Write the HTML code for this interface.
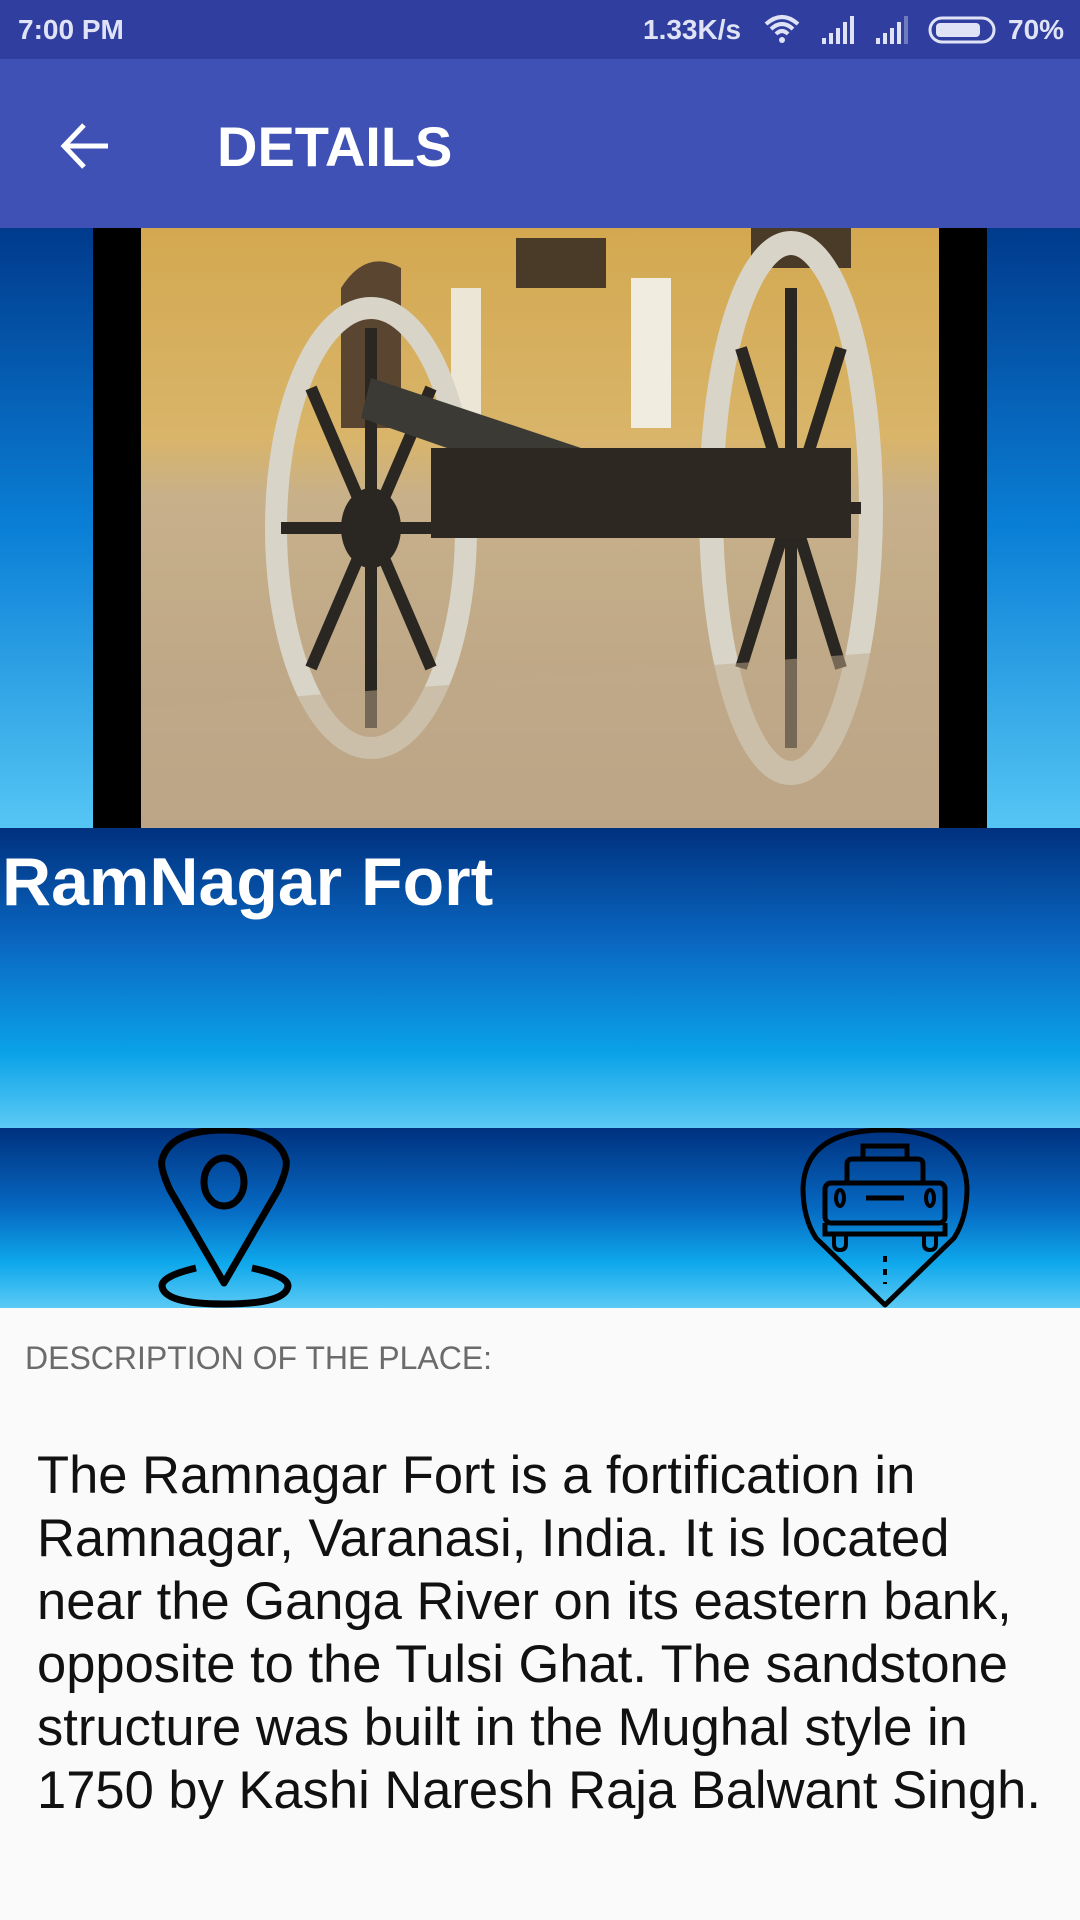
<!DOCTYPE html>
<html><head><meta charset="utf-8"><style>
*{margin:0;padding:0;box-sizing:border-box}
body{width:1080px;height:1920px;overflow:hidden;background:#fafafa;font-family:"Liberation Sans",sans-serif;position:relative}
.status{position:absolute;top:0;left:0;width:1080px;height:59px;background:#303f9f;color:#dfe3f5;font-weight:bold;font-size:28px}
.appbar{position:absolute;top:59px;left:0;width:1080px;height:169px;background:#3f51b5}
.imgband{position:absolute;top:228px;left:0;width:1080px;height:600px;background:linear-gradient(#003a8c,#0a7fd6 50%,#55c6f4)}
.black{position:absolute;top:228px;left:93px;width:894px;height:600px;background:#000}
.title{position:absolute;top:828px;left:0;width:1080px;height:300px;background:linear-gradient(#00317f,#0a6ac4 40%,#0aa2e8 75%,#5ccaf5)}
.icons{position:absolute;top:1128px;left:0;width:1080px;height:180px;background:linear-gradient(#00317f,#0669c2 45%,#0ea8ec 75%,#5ccaf5);overflow:hidden}
.lbl{position:absolute;top:1340px;left:25px;font-size:32px;color:#6b6b6b}
.body{position:absolute;top:1444px;left:37px;font-size:52.5px;line-height:63px;color:#111;white-space:nowrap}
</style></head><body>
<div class="status">
<span style="position:absolute;left:18px;top:14px">7:00 PM</span>
<span style="position:absolute;left:643px;top:14px">1.33K/s</span>
<svg style="position:absolute;left:762px;top:14px" width="60" height="32" viewBox="0 0 60 32"><path d="M4 10 Q20 -4 36 10 M9 15 Q20 5 31 15 M14 20 Q20 14 26 20" stroke="#dfe3f5" stroke-width="4" fill="none"/><circle cx="20" cy="26" r="3" fill="#dfe3f5"/></svg>
<svg style="position:absolute;left:820px;top:14px" width="100" height="32"><g fill="#dfe3f5"><rect x="2" y="24" width="4" height="6"/><rect x="9" y="19" width="4" height="11"/><rect x="16" y="14" width="4" height="16"/><rect x="23" y="8" width="4" height="22"/><rect x="30" y="2" width="4" height="28"/>
<rect x="56" y="24" width="4" height="6"/><rect x="63" y="19" width="4" height="11"/><rect x="70" y="14" width="4" height="16"/><rect x="77" y="8" width="4" height="22"/></g><rect x="84" y="2" width="4" height="28" fill="#6f7bbd"/></svg>
<svg style="position:absolute;left:928px;top:16px" width="70" height="30"><rect x="2" y="2" width="64" height="24" rx="12" fill="none" stroke="#dfe3f5" stroke-width="3"/><rect x="8" y="7" width="44" height="14" rx="4" fill="#dfe3f5"/></svg>
<span style="position:absolute;left:1008px;top:14px">70%</span>
</div>
<div class="appbar">
<svg style="position:absolute;left:58px;top:60px" width="54" height="54" viewBox="0 0 54 54"><path d="M50 27 H8 M26 6 L6 27 L26 48" stroke="#fff" stroke-width="5" fill="none"/></svg>
<span style="position:absolute;left:217px;top:55px;font-size:56px;color:#fff;font-weight:bold">DETAILS</span>
</div>
<div class="imgband"></div>
<div class="black"></div>
<svg style="position:absolute;left:141px;top:228px" width="798" height="600" viewBox="0 0 798 600">
<defs><linearGradient id="g" x1="0" y1="0" x2="0" y2="1"><stop offset="0" stop-color="#d3a850"/><stop offset="0.35" stop-color="#d9b56a"/><stop offset="0.45" stop-color="#c7b08a"/><stop offset="1" stop-color="#b8a184"/></linearGradient></defs>
<rect width="798" height="600" fill="url(#g)"/>
<path d="M200 60 Q225 20 260 40 L260 200 L200 200Z" fill="#5a4530"/>
<rect x="375" y="10" width="90" height="50" fill="#4a3a28"/>
<rect x="610" y="0" width="100" height="40" fill="#4a3a28"/>
<rect x="490" y="50" width="40" height="150" fill="#f0ece0"/>
<rect x="310" y="60" width="30" height="140" fill="#ece6d6"/>
<ellipse cx="230" cy="300" rx="95" ry="220" fill="none" stroke="#d8d4c8" stroke-width="22"/>
<ellipse cx="650" cy="280" rx="80" ry="265" fill="none" stroke="#d8d4c8" stroke-width="24"/>
<path d="M230 100 L230 500 M140 300 L320 300 M170 160 L290 440 M290 160 L170 440" stroke="#2a2622" stroke-width="12"/>
<path d="M650 60 L650 520 M580 280 L720 280 M600 120 L700 440 M700 120 L600 440" stroke="#2a2622" stroke-width="12"/>
<path d="M230 150 L470 230 L450 270 L220 190Z" fill="#3b3a34"/>
<rect x="290" y="220" width="420" height="90" fill="#2d2822"/>
<ellipse cx="230" cy="300" rx="30" ry="40" fill="#2a2622"/>
<path d="M0 480 L798 420 L798 600 L0 600Z" fill="#bfa98a" opacity="0.5"/>
</svg>
<div class="title"><div style="position:absolute;left:2px;top:15px;font-size:68px;font-weight:bold;color:#fff">RamNagar Fort</div></div>
<div class="icons">
<svg style="position:absolute;left:150px;top:0" width="150" height="180" viewBox="0 0 150 180">
<path d="M74 155 L20 62 Q10 40 12 32 Q20 2 74 2 Q128 2 136 32 Q138 40 128 62 Z" fill="none" stroke="#000" stroke-width="7" stroke-linejoin="round"/>
<ellipse cx="74" cy="54" rx="20" ry="24" fill="none" stroke="#000" stroke-width="7"/>
<path d="M46 140 Q12 148 12 158 Q14 176 74 176 Q136 176 138 158 Q138 148 102 140" fill="none" stroke="#000" stroke-width="7"/>
</svg>
<svg style="position:absolute;left:800px;top:0" width="172" height="180" viewBox="0 0 172 180">
<path d="M85 177 L16 110 Q3 90 3 60 Q5 2 85 2 Q165 2 167 60 Q167 90 154 110 Z" fill="none" stroke="#000" stroke-width="5" stroke-linejoin="round"/>
<rect x="63" y="18" width="44" height="13" fill="none" stroke="#000" stroke-width="5"/>
<path d="M47 55 L47 36 Q47 31 53 31 L117 31 Q123 31 123 36 L123 55" fill="none" stroke="#000" stroke-width="5"/>
<rect x="25" y="55" width="120" height="40" rx="6" fill="none" stroke="#000" stroke-width="5"/>
<path d="M25 95 V106 H145 V95 M66 70 H104" fill="none" stroke="#000" stroke-width="5"/>
<ellipse cx="40" cy="70" rx="4" ry="8" fill="none" stroke="#000" stroke-width="4"/>
<ellipse cx="130" cy="70" rx="4" ry="8" fill="none" stroke="#000" stroke-width="4"/>
<path d="M34 106 V116 Q34 122 40 122 Q46 122 46 116 V106 M124 106 V116 Q124 122 130 122 Q136 122 136 116 V106" fill="none" stroke="#000" stroke-width="4"/>
<path d="M85 128 V156" stroke="#000" stroke-width="4" stroke-dasharray="6 7"/>
</svg>
</div>
<div class="lbl">DESCRIPTION OF THE PLACE:</div>
<div class="body">The Ramnagar Fort is a fortification in<br>Ramnagar, Varanasi, India. It is located<br>near the Ganga River on its eastern bank,<br>opposite to the Tulsi Ghat. The sandstone<br>structure was built in the Mughal style in<br>1750 by Kashi Naresh Raja Balwant Singh.</div>
</body></html>
